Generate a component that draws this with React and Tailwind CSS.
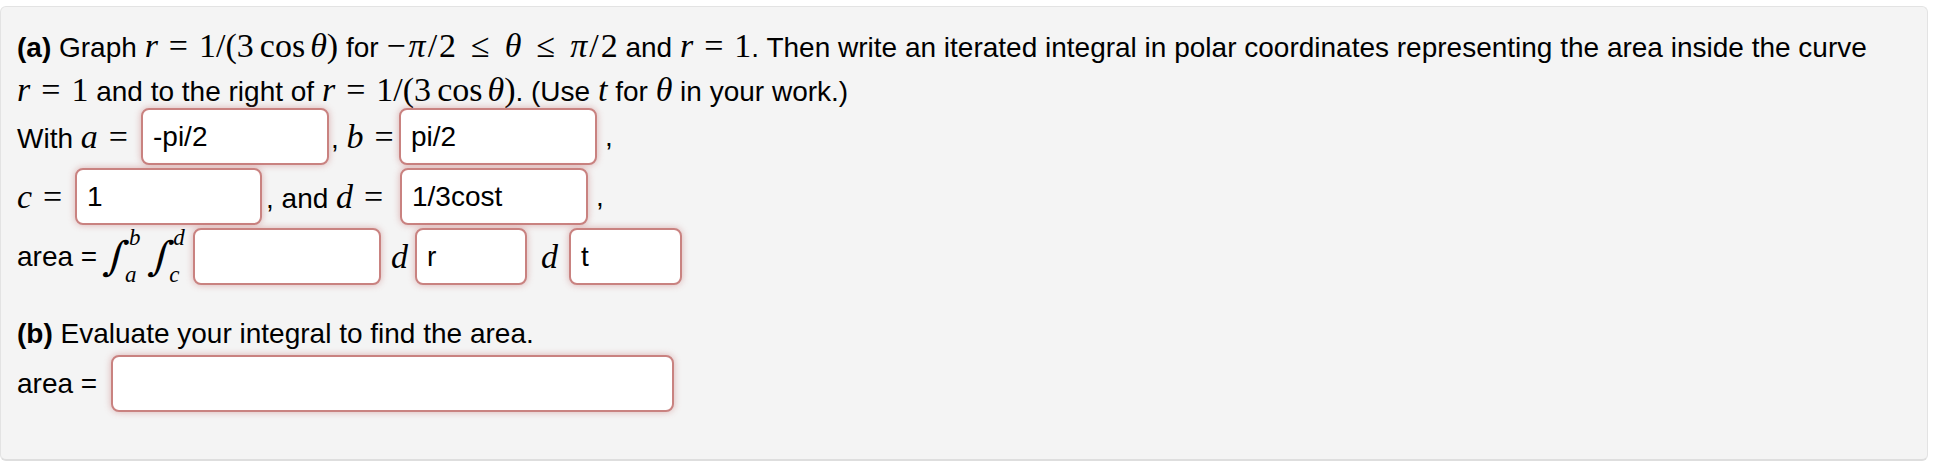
import React from "react";

// math bits, serif like MathJax
const V = ({ children }) => (
  <span className="font-['Liberation_Serif'] italic text-[34px]">{children}</span>
);
const M = ({ children }) => (
  <span className="font-['Liberation_Serif'] text-[34px]">{children}</span>
);
const Op = ({ children, wide = false }) => (
  <span
    className={`font-['Liberation_Serif'] text-[34px] ${wide ? "mx-[15px]" : "mx-[11px]"}`}
  >
    {children}
  </span>
);
const Cos = () => (
  <>
    <M>1/(3</M>
    <span className="font-['Liberation_Serif'] text-[34px] ml-[6px] mr-[5px]">cos</span>
    <V>θ</V>
    <M>)</M>
  </>
);
const HalfPi = () => (
  <>
    <V>π</V>
    <span className="font-['Liberation_Serif'] text-[34px] mx-[2px]">/</span>
    <M>2</M>
  </>
);

const Field = ({ value = "", className = "" }) => (
  <div
    className={`h-[57px] shrink-0 rounded-[8px] border-2 border-[#c98280] bg-white shadow-[0_0_7px_rgba(190,95,95,0.45)] pl-[10px] flex items-center text-[28px] text-black ${className}`}
  >
    {value}
  </div>
);

const Integral = ({ top, bottom }) => (
  <span className="inline-flex items-stretch h-[50px]">
    <span className="font-['DejaVu_Serif'] text-[40px] leading-[50px] -skew-x-12">∫</span>
    <span className="flex flex-col justify-between font-['Liberation_Serif'] italic text-[23px] leading-[20px] ml-[2px]">
      <span className="-mt-[3px]">{top}</span>
      <span className="-ml-[4px] mb-[-4px]">{bottom}</span>
    </span>
  </span>
);

export default function App() {
  return (
    <div className="w-[1936px] h-[466px] bg-white pt-[6px] font-['Liberation_Sans'] text-black">
      <div className="w-[1928px] h-[455px] bg-[#f4f4f4] border border-[#e3e3e3] border-b-2 border-b-[#dedede] rounded-md pl-[16px] pt-[18px] text-[28px]">
        <div className="leading-[42px] whitespace-nowrap">
          <b>(a)</b> Graph <V>r</V>
          <Op>=</Op>
          <Cos /> for <span className="font-['Liberation_Serif'] text-[34px] mr-[3px]">−</span>
          <HalfPi />
          <Op wide>≤</Op>
          <V>θ</V>
          <Op wide>≤</Op>
          <HalfPi /> and <V>r</V>
          <Op>=</Op>
          <M>1</M>. Then write an iterated integral in polar coordinates
          representing the area inside the curve
        </div>
        <div className="leading-[42px] h-[39px] whitespace-nowrap">
          <V>r</V>
          <Op>=</Op>
          <M>1</M> and to the right of <V>r</V>
          <Op>=</Op>
          <Cos />. (Use <V>t</V> for <V>θ</V> in your work.)
        </div>

        <div className="flex items-center h-[57px]">
          <div className="w-[124px] whitespace-nowrap">
            With <V>a</V>
            <Op>=</Op>
          </div>
          <Field value="-pi/2" className="w-[188px]" />
          <div className="w-[70px] whitespace-nowrap pl-[2px]">
            , <V>b</V>
            <Op>=</Op>
          </div>
          <Field value="pi/2" className="w-[198px]" />
          <div className="pl-[8px]">,</div>
        </div>

        <div className="flex items-center h-[57px] mt-[3px]">
          <div className="w-[58px] whitespace-nowrap">
            <V>c</V>
            <Op>=</Op>
          </div>
          <Field value="1" className="w-[187px]" />
          <div className="w-[138px] whitespace-nowrap pl-[4px]">
            , and <V>d</V>
            <Op>=</Op>
          </div>
          <Field value="1/3cost" className="w-[188px]" />
          <div className="pl-[8px]">,</div>
        </div>

        <div className="flex items-center h-[57px] mt-[3px]">
          <div className="w-[176px] whitespace-nowrap flex items-center">
            <span>area =</span>
            <span className="ml-[9px]">
              <Integral top="b" bottom="a" />
            </span>
            <span className="ml-[10px]">
              <Integral top="d" bottom="c" />
            </span>
          </div>
          <Field className="w-[188px]" />
          <div className="w-[34px] pl-[10px]">
            <V>d</V>
          </div>
          <Field value="r" className="w-[112px]" />
          <div className="w-[42px] pl-[14px]">
            <V>d</V>
          </div>
          <Field value="t" className="w-[113px]" />
        </div>

        <div className="leading-[42px] mt-[28px] whitespace-nowrap">
          <b>(b)</b> Evaluate your integral to find the area.
        </div>
        <div className="flex items-center h-[57px]">
          <div className="w-[94px] whitespace-nowrap">area =</div>
          <Field className="w-[563px]" />
        </div>
      </div>
    </div>
  );
}
